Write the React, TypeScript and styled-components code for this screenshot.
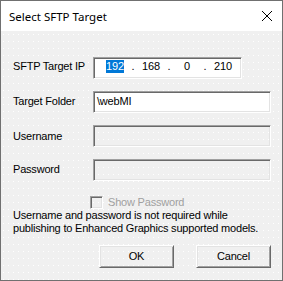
import React from "react";
import styled, { createGlobalStyle } from "styled-components";

const Global = createGlobalStyle`
  html, body {
    margin: 0;
    padding: 0;
    background: #ffffff;
  }
  * {
    box-sizing: border-box;
  }
`;

const sunken = `
  border: 1px solid;
  border-color: #a0a0a0 #ffffff #ffffff #a0a0a0;
  box-shadow: inset 1px 1px 0 #696969, inset -1px -1px 0 #e3e3e3;
`;

const Window = styled.div`
  width: 283px;
  height: 281px;
  border: 1px solid #707070;
  display: flex;
  flex-direction: column;
  background: #ffffff;
  font-family: "Liberation Sans", Arial, sans-serif;
  font-size: 11px;
  line-height: 13px;
  letter-spacing: -0.2px;
  color: #000000;
`;

const TitleBar = styled.div`
  height: 30px;
  flex: none;
  display: flex;
  align-items: center;
  justify-content: space-between;
  padding: 0 9px 0 8px;

  .title {
    font-family: "Noto Sans", "Open Sans", sans-serif;
    font-size: 11.5px;
    letter-spacing: 0;
    padding-top: 1px;
  }
`;

const CloseIcon = () => (
  <svg width="12" height="12" viewBox="0 0 12 12">
    <path d="M1 1 L11 11 M11 1 L1 11" stroke="#000" strokeWidth="1" fill="none" />
  </svg>
);

const Client = styled.div`
  flex: 1;
  display: flex;
  flex-direction: column;
  padding: 26px 11px 0 12px;
  background-color: #f0f0f0;
  background-image: conic-gradient(from 270deg at 1px 1px, #ffffff 90deg, transparent 0);
  background-size: 5px 7px;
  background-position: 2px 3px;
`;

const FieldGrid = styled.div`
  display: grid;
  grid-template-columns: 80px 178px;
  grid-auto-rows: 22px;
  row-gap: 12px;
`;

const Label = styled.div<{ $top?: number }>`
  padding-top: ${(p) => p.$top ?? 4}px;
  white-space: nowrap;
`;

const Edit = styled.div<{ $disabled?: boolean }>`
  ${sunken}
  height: 22px;
  padding: 3px 2px 0 3px;
  background: ${(p) => (p.$disabled ? "transparent" : "#ffffff")};
  white-space: nowrap;
`;

const IpBox = styled.div`
  ${sunken}
  width: 149px;
  height: 22px;
  background: #ffffff;
  display: flex;
  align-items: flex-start;
  padding: 2px 0 0 7px;
`;

const IpPart = styled.div`
  width: 28px;
  display: flex;
  justify-content: center;

  .sel {
    background: #0078d7;
    color: #ffffff;
  }
`;

const IpDot = styled.div`
  width: 8px;
  text-align: center;
`;

const CheckRow = styled.div`
  margin-top: 15px;
  padding-left: 77px;
  height: 13px;
  display: flex;
  align-items: center;
  gap: 5px;
  color: #a0a0a0;
`;

const CheckBox = styled.div`
  ${sunken}
  width: 13px;
  height: 13px;
  flex: none;
  border-color: #a0a0a0 #ffffff #ffffff #a0a0a0;
  box-shadow: inset 1px 1px 0 #696969, inset -1px -1px 0 #e3e3e3;
`;

const Note = styled.p`
  margin: 0;
  line-height: 13px;
`;

const ButtonRow = styled.div`
  margin-top: 10px;
  display: flex;
  justify-content: flex-end;
  gap: 22px;
`;

const Button = styled.div`
  width: 75px;
  height: 23px;
  display: flex;
  align-items: center;
  justify-content: center;
  border: 1px solid;
  border-color: #ffffff #696969 #696969 #ffffff;
  box-shadow: inset 1px 1px 0 #e3e3e3, inset -1px -1px 0 #a0a0a0;
`;

const ip = ["192", "168", "0", "210"];

export default function App() {
  return (
    <>
      <Global />
      <Window>
        <TitleBar>
          <span className="title">Select SFTP Target</span>
          <CloseIcon />
        </TitleBar>
        <Client>
          <FieldGrid>
            <Label $top={3}>SFTP Target IP</Label>
            <IpBox>
              {ip.map((v, i) => (
                <React.Fragment key={i}>
                  <IpPart>{i === 0 ? <span className="sel">{v}</span> : <span>{v}</span>}</IpPart>
                  {i < 3 && <IpDot>.</IpDot>}
                </React.Fragment>
              ))}
            </IpBox>

            <Label>Target Folder</Label>
            <Edit>{"\\webMI"}</Edit>

            <Label $top={5}>Username</Label>
            <Edit $disabled />

            <Label>Password</Label>
            <Edit $disabled />
          </FieldGrid>

          <CheckRow>
            <CheckBox />
            <span>Show Password</span>
          </CheckRow>

          <Note>
            Username and password is not required while
            <br />
            publishing to Enhanced Graphics supported models.
          </Note>

          <ButtonRow>
            <Button>OK</Button>
            <Button>Cancel</Button>
          </ButtonRow>
        </Client>
      </Window>
    </>
  );
}
